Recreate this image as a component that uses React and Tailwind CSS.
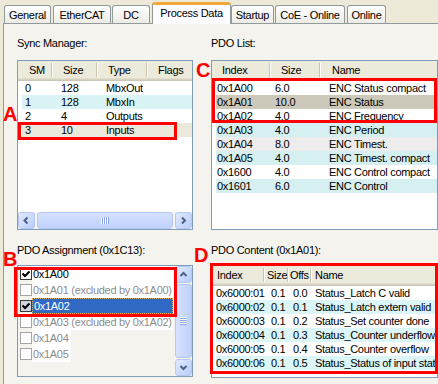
import React from "react";

const Chevron = ({ dir }) => {
  const d = {
    left: "M5.5 1.5 L2.5 4.5 L5.5 7.5",
    right: "M3 1.5 L6 4.5 L3 7.5",
    up: "M1.5 6 L4.5 3 L7.5 6",
    down: "M1.5 3 L4.5 6 L7.5 3",
  }[dir];
  return (
    <svg width="9" height="9" viewBox="0 0 9 9">
      <path d={d} fill="none" stroke="#4d6185" strokeWidth="2" />
    </svg>
  );
};

const ScrollBtn = ({ dir }) => (
  <div className="flex h-[17px] w-[17px] shrink-0 items-center justify-center rounded-[3px] border border-[#b4c8f6] bg-[linear-gradient(135deg,#e0e9fe,#b9cdfa)]">
    <Chevron dir={dir} />
  </div>
);

const GripV = () => (
  <div className="flex">
    {[0, 1, 2, 3].map((i) => (
      <div key={i} className="h-[7px] w-[2px] border-l border-r border-l-white border-r-[#8ea7e6]" />
    ))}
  </div>
);

const GripH = () => (
  <div className="flex flex-col">
    {[0, 1, 2, 3].map((i) => (
      <div key={i} className="h-[2px] w-[7px] border-t border-b border-t-white border-b-[#8ea7e6]" />
    ))}
  </div>
);

const HScroll = () => (
  <div className="flex h-[17px] shrink-0 items-center bg-[#f6f5f0]">
    <ScrollBtn dir="left" />
    <div className="mx-[2px] flex h-[17px] flex-1 items-center justify-center rounded-[3px] border border-[#b4c8f6] bg-[linear-gradient(to_bottom,#d6e2fe,#bfd1fb)]">
      <GripV />
    </div>
    <ScrollBtn dir="right" />
  </div>
);

const VScroll = () => (
  <div className="flex w-[17px] shrink-0 flex-col bg-[#f6f5f0]">
    <ScrollBtn dir="up" />
    <div className="my-[1px] flex w-[17px] flex-1 items-center justify-center rounded-[3px] border border-[#b4c8f6] bg-[linear-gradient(to_right,#d6e2fe,#bfd1fb)]">
      <GripH />
    </div>
    <ScrollBtn dir="down" />
  </div>
);

const HeaderCell = ({ cls, label, divider = true }) => (
  <div className={`flex h-full items-center pb-[2px] ${cls}`}>
    <span>{label}</span>
    {divider && (
      <div className="ml-auto h-[14px] w-[2px] border-l border-r border-l-[#c7c5b2] border-r-white" />
    )}
  </div>
);

const Header = ({ cols }) => (
  <div className="flex h-[20px] shrink-0 whitespace-nowrap bg-[#ebeadb] shadow-[inset_0_-1px_0_#cbc7b8,inset_0_-2px_0_#d6d2c2,inset_0_-3px_0_#e2decd]">
    {cols.map((c, i) => (
      <HeaderCell key={i} cls={c.cls} label={c.label} divider={c.divider !== false} />
    ))}
  </div>
);

const Row = ({ bg, cells, cols }) => (
  <div className={`ml-[4px] flex h-[14px] shrink-0 items-center whitespace-nowrap leading-[14px] ${bg}`}>
    {cells.map((c, i) => (
      <div key={i} className={cols[i]}>
        {c}
      </div>
    ))}
  </div>
);

const smCols = ["w-[39px] pl-[3px] shrink-0", "w-[45px] shrink-0", "shrink-0"];
const smRows = [
  { bg: "bg-white", cells: ["0", "128", "MbxOut"] },
  { bg: "bg-[#daf4f5]", cells: ["1", "128", "MbxIn"] },
  { bg: "bg-white", cells: ["2", "4", "Outputs"] },
  { bg: "bg-[#ebe9dc]", cells: ["3", "10", "Inputs"] },
];

const plCols = ["w-[59px] pl-[1px] shrink-0", "w-[54px] shrink-0", "shrink-0"];
const plRows = [
  { bg: "bg-white", cells: ["0x1A00", "6.0", "ENC Status compact"] },
  { bg: "bg-[#cdc9ba]", cells: ["0x1A01", "10.0", "ENC Status"] },
  { bg: "bg-white", cells: ["0x1A02", "4.0", "ENC Frequency"] },
  { bg: "bg-[#d6eff0]", cells: ["0x1A03", "4.0", "ENC Period"] },
  { bg: "bg-[#ececec]", cells: ["0x1A04", "8.0", "ENC Timest."] },
  { bg: "bg-[#d6eff0]", cells: ["0x1A05", "4.0", "ENC Timest. compact"] },
  { bg: "bg-white", cells: ["0x1600", "4.0", "ENC Control compact"] },
  { bg: "bg-[#d6eff0]", cells: ["0x1601", "6.0", "ENC Control"] },
];

const pcCols = ["w-[55px] shrink-0", "w-[22px] shrink-0", "w-[22px] shrink-0", "shrink-0"];
const pcRows = [
  { bg: "bg-white", cells: ["0x6000:01", "0.1", "0.0", "Status_Latch C valid"] },
  { bg: "bg-[#dcf6f8]", cells: ["0x6000:02", "0.1", "0.1", "Status_Latch extern valid"] },
  { bg: "bg-white", cells: ["0x6000:03", "0.1", "0.2", "Status_Set counter done"] },
  { bg: "bg-[#dcf6f8]", cells: ["0x6000:04", "0.1", "0.3", "Status_Counter underflow"] },
  { bg: "bg-white", cells: ["0x6000:05", "0.1", "0.4", "Status_Counter overflow"] },
  { bg: "bg-[#dcf6f8]", cells: ["0x6000:06", "0.1", "0.5", "Status_Status of input status"] },
];

const Check = () => (
  <svg width="10" height="10" viewBox="0 0 10 10">
    <path d="M1.5 4.5 L4 7 L8.5 2.5" fill="none" stroke="#000" strokeWidth="2" />
  </svg>
);

const assignItems = [
  { label: "0x1A00", checked: true, enabled: true, full: true },
  { label: "0x1A01 (excluded by 0x1A00)", checked: false, enabled: false, full: true },
  { label: "0x1A02", checked: true, enabled: true, full: true, selected: true },
  { label: "0x1A03 (excluded by 0x1A02)", checked: false, enabled: false, full: true },
  { label: "0x1A04", checked: false, enabled: false, full: false },
  { label: "0x1A05", checked: false, enabled: false, full: false },
];

const AssignItem = ({ item }) => (
  <div className="flex h-[16px] shrink-0 items-center whitespace-nowrap">
    <div
      className={`ml-[2px] flex h-[12px] w-[12px] shrink-0 items-center justify-center border ${
        item.enabled ? "border-[#3a3a3a]" : "border-[#a5a5a5]"
      } ${item.selected ? "bg-[#cfd4de]" : "bg-white"}`}
    >
      {item.checked && <Check />}
    </div>
    <div
      className={`flex h-[16px] items-center pl-[1px] ${
        item.full ? "w-[141px]" : "pr-[2px]"
      } ${
        item.selected
          ? "border border-dotted border-[#e9b04a] bg-[#316ac5] text-white"
          : item.enabled
          ? "bg-white text-black"
          : "bg-white text-[#8d8d8d]"
      }`}
    >
      {item.label}
    </div>
  </div>
);

const Tab = ({ label, cls, selected }) => (
  <div
    className={`flex shrink-0 justify-center rounded-t-[3px] border-l border-r border-[#919b9c] ${cls} ${
      selected
        ? "relative z-10 mb-[-1px] h-[22px] items-start border-t-[3px] border-t-[#f3a93a] bg-[#fcfcfe] pt-[2px]"
        : "h-[18px] items-center border-t bg-[linear-gradient(to_bottom,#ffffff,#ecebe5)] pt-[1px]"
    }`}
  >
    {label}
  </div>
);

export default function App() {
  return (
    <div className="relative h-[384px] w-[438px] overflow-hidden bg-[#ece9d8] font-['Liberation_Sans',Arial,sans-serif] text-[11px] leading-[13px] tracking-[-0.3px] text-black">
      <div className="flex h-[23px] items-end">
        <Tab label="General" cls="ml-[4px] w-[47px]" />
        <Tab label="EtherCAT" cls="ml-[2px] w-[58px]" />
        <Tab label="DC" cls="ml-[1px] w-[38px]" />
        <Tab label="Process Data" cls="ml-[2px] w-[79px]" selected />
        <Tab label="Startup" cls="w-[43px]" />
        <Tab label="CoE - Online" cls="ml-[1px] w-[70px]" />
        <Tab label="Online" cls="ml-[2px] w-[39px]" />
      </div>
      <div className="ml-[3px] flex h-[361px] border-l border-t border-[#919b9c] bg-[#f4f3ee] pl-[13px] pt-[13px]">
        <div className="flex w-[176px] shrink-0 flex-col">
          <div className="h-[13px]">Sync Manager:</div>
          <div className="mt-[10px] flex h-[170px] flex-col overflow-hidden border border-[#7f9db9] bg-white">
            <Header
              cols={[
                { label: "SM", cls: "w-[35px] pl-[11px] shrink-0" },
                { label: "Size", cls: "w-[45px] pl-[10px] shrink-0" },
                { label: "Type", cls: "w-[50px] pl-[10px] shrink-0" },
                { label: "Flags", cls: "flex-1 pl-[10px]", divider: false },
              ]}
            />
            {smRows.map((r, i) => (
              <Row key={i} bg={r.bg} cells={r.cells} cols={smCols} />
            ))}
            <div className="flex-1" />
            <HScroll />
          </div>
          <div className="mt-[14px] h-[13px] whitespace-nowrap">PDO Assignment (0x1C13):</div>
          <div className="mt-[8px] flex h-[112px] overflow-hidden border border-[#7f9db9] bg-[#f4f3ee]">
            <div className="flex flex-1 flex-col">
              {assignItems.map((it, i) => (
                <AssignItem key={i} item={it} />
              ))}
            </div>
            <VScroll />
          </div>
        </div>
        <div className="ml-[18px] flex w-[227px] shrink-0 flex-col">
          <div className="h-[13px]">PDO List:</div>
          <div className="mt-[10px] flex h-[170px] flex-col overflow-hidden border border-[#7f9db9] bg-white">
            <Header
              cols={[
                { label: "Index", cls: "w-[59px] pl-[10px] shrink-0" },
                { label: "Size", cls: "w-[50px] pl-[10px] shrink-0" },
                { label: "Name", cls: "flex-1 pl-[11px]", divider: false },
              ]}
            />
            {plRows.map((r, i) => (
              <Row key={i} bg={r.bg} cells={r.cells} cols={plCols} />
            ))}
          </div>
          <div className="mt-[14px] h-[13px] whitespace-nowrap">PDO Content (0x1A01):</div>
          <div className="mt-[8px] flex h-[113px] flex-col overflow-hidden border border-[#7f9db9] bg-white">
            <Header
              cols={[
                { label: "Index", cls: "w-[53px] pl-[5px] shrink-0" },
                { label: "Size", cls: "w-[23px] pl-[2px] shrink-0" },
                { label: "Offs", cls: "w-[24px] pl-[2px] shrink-0" },
                { label: "Name", cls: "flex-1 pl-[3px]", divider: false },
              ]}
            />
            {pcRows.map((r, i) => (
              <Row key={i} bg={r.bg} cells={r.cells} cols={pcCols} />
            ))}
          </div>
        </div>
      </div>

      {/* annotations */}
      <div className="absolute left-[18px] top-[122px] h-[18px] w-[159px] border-[3px] border-[#ff0000]" />
      <div className="absolute left-[14px] top-[267px] h-[50px] w-[163px] border-[3px] border-[#ff0000]" />
      <div className="absolute left-[212px] top-[78px] h-[45px] w-[225px] border-[3px] border-[#ff0000]" />
      <div className="absolute left-[210px] top-[263px] h-[111px] w-[228px] border-[3px] border-[#ff0000]" />
      <div className="absolute left-[3px] top-[104px] text-[20px] font-bold leading-none tracking-normal text-[#ff0000]">A</div>
      <div className="absolute left-[3px] top-[249px] text-[20px] font-bold leading-none tracking-normal text-[#ff0000]">B</div>
      <div className="absolute left-[196px] top-[60px] text-[20px] font-bold leading-none tracking-normal text-[#ff0000]">C</div>
      <div className="absolute left-[194px] top-[245px] text-[20px] font-bold leading-none tracking-normal text-[#ff0000]">D</div>
    </div>
  );
}
